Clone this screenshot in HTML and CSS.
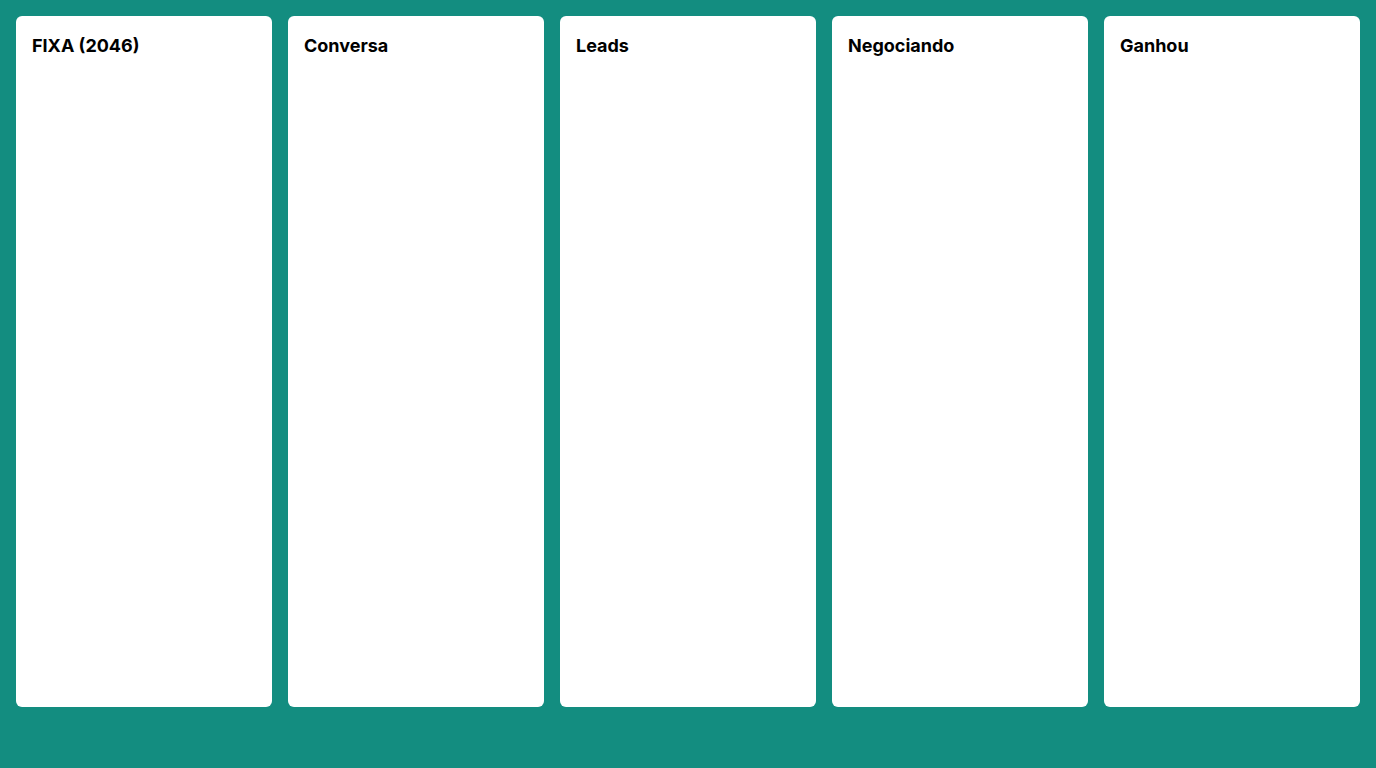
FILE: index.html
```html
<!DOCTYPE html>
<html lang="pt">
<head>
<meta charset="utf-8">
<title>Board</title>
<link rel="stylesheet" href="styles.css">
</head>
<body>
<main class="board">
  <section class="column"><h2 class="column-title">FIXA (2046)</h2></section>
  <section class="column"><h2 class="column-title">Conversa</h2></section>
  <section class="column"><h2 class="column-title">Leads</h2></section>
  <section class="column"><h2 class="column-title">Negociando</h2></section>
  <section class="column"><h2 class="column-title">Ganhou</h2></section>
</main>
</body>
</html>
```
FILE: styles.css
```css
html, body {
  margin: 0;
  padding: 0;
  height: 100%;
}
body {
  background: #138d80;
  font-family: Inter, "Noto Sans", sans-serif;
  color: #000;
}
.board {
  display: flex;
  gap: 16px;
  padding: 16px;
}
.column {
  flex: 0 0 256px;
  height: 691px;
  box-sizing: border-box;
  background: #fff;
  border-radius: 6px;
  padding: 16px;
}
.column-title {
  margin: 0;
  font-size: 18px;
  font-weight: 700;
  line-height: 28px;
}
```
